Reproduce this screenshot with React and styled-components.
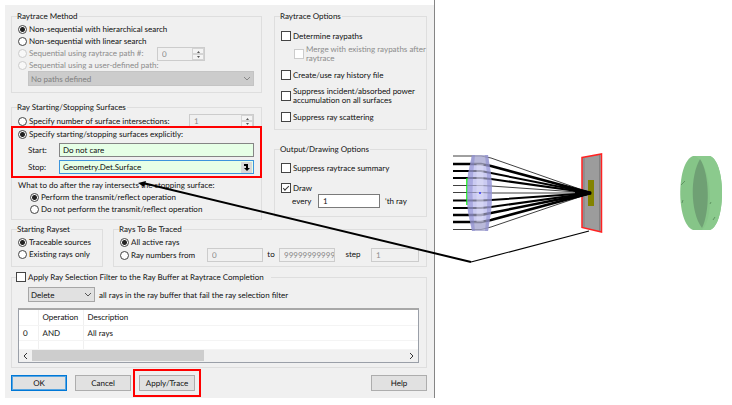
import React from "react";
import styled, { createGlobalStyle } from "styled-components";

const GlobalStyle = createGlobalStyle`
  *, *::before, *::after { box-sizing: border-box; }
  body {
    margin: 0;
    background: #fff;
    color: #111;
    font: 8px/12px Lato, "Liberation Sans", sans-serif;
    text-rendering: geometricPrecision;
  }
  button, input, select, table { font: inherit; color: inherit; margin: 0; text-rendering: inherit; }
`;

const Page = styled.main`
  position: relative;
  display: grid;
  grid-template-columns: minmax(0, 435fr) minmax(0, 297fr);
  align-items: start;
`;

const DialogArea = styled.div`
  padding: 5px 0 0 5px;
  border-right: 1px solid #858585;
`;

const Dialog = styled.form`
  display: flex;
  flex-direction: column;
  padding: 5px 7px 7px 6px;
  background: #f0f0f0;
`;

const Columns = styled.div`
  display: grid;
  grid-template-columns: ${(p) => p.$tracks};
  gap: ${(p) => p.$gap}px;
  margin-top: ${(p) => p.$above || 0}px;
`;

const Stack = styled.div`
  display: flex;
  flex-direction: column;
  min-width: 0;
  gap: ${(p) => p.$gap || 0}px;
`;

const Group = styled.fieldset`
  display: block;
  min-width: 0;
  margin: ${(p) => p.$above || 0}px 0 0;
  padding: ${(p) => p.$top || 1}px 7px ${(p) => p.$bottom || 6}px 6px;
  border: 1px solid #dedede;
`;

const Legend = styled.legend`
  display: flex;
  align-items: center;
  margin-left: ${(p) => (p.$check ? -2 : -1)}px;
  padding: 0 ${(p) => (p.$check ? 7 : 1)}px 0 0;
  height: 12px;
  white-space: nowrap;
`;

const Row = styled.div`
  display: flex;
  align-items: center;
  min-height: 12px;
  gap: ${(p) => p.$gap || 0}px;
  padding-left: ${(p) => p.$indent || 0}px;
  white-space: nowrap;
`;

const Option = styled.label`
  display: flex;
  align-items: center;
  gap: 2px;
  min-height: 12px;
  line-height: ${(p) => (p.$tight ? 9 : 12)}px;
  padding-left: ${(p) => p.$indent || 0}px;
  white-space: nowrap;
  color: ${(p) => (p.$off ? "#8c8c8c" : "inherit")};
`;

const RadioInput = styled.input.attrs({ type: "radio" })`
  appearance: none;
  flex: none;
  width: 9px;
  height: 9px;
  border: 1px solid #444;
  border-radius: 50%;
  background: #fff;
  &:checked { background: radial-gradient(circle, #222 0 2px, #fff 3px); }
  &:disabled { border-color: #ccc; background: #f8f8f8; }
`;

const CheckInput = styled.input.attrs({ type: "checkbox" })`
  appearance: none;
  flex: none;
  display: grid;
  place-items: center;
  width: 10px;
  height: 10px;
  border: 1px solid #444;
  background: #fff;
  &:disabled { border-color: #ccc; }
  &:checked::after {
    content: "";
    width: 6px;
    height: 3px;
    border: solid #333;
    border-width: 0 0 1px 1px;
    transform: translateY(-1px) rotate(-45deg);
  }
`;

const TextInput = styled.input.attrs({ type: "text" })`
  flex: ${(p) => (p.$width ? `0 1 ${p.$width}px` : "1")};
  width: ${(p) => (p.$width ? `${p.$width}px` : "100%")};
  min-width: 0;
  height: 14px;
  padding: 0 0 0 4px;
  border: 1px solid #7a7a7a;
  background: #fff;
  &:disabled { border-color: #ccc; background: #f0f0f0; color: #8c8c8c; }
`;

const SurfaceBox = styled.div`
  flex: 1;
  display: flex;
  align-items: center;
  min-width: 0;
  height: 14px;
  padding-right: 1px;
  border: 1px solid ${(p) => (p.$active ? "#3c94dc" : "#858585")};
  background: #e6ffe6;
`;

const SurfaceInput = styled.input.attrs({ type: "text" })`
  flex: 1;
  min-width: 0;
  height: 12px;
  padding: 0 3px;
  border: 0;
  background: transparent;
`;

const PickButton = styled.button.attrs({ type: "button" })`
  display: grid;
  place-items: center;
  width: 11px;
  height: 11px;
  padding: 0;
  border: 0;
  background: #d8d8d8;
`;

const FieldLabel = styled.label`
  width: ${(p) => p.$width}px;
  flex: none;
`;

const Centered = styled.span`
  text-align: center;
`;

const Highlight = styled.div`
  outline: 2px solid #f00;
  outline-offset: ${(p) => p.$offset}px;
`;

const SurfaceFields = styled(Highlight)`
  display: flex;
  flex-direction: column;
  gap: 3px;
  margin: 0 -6px 3px -5px;
  padding: 0 6px 2px 5px;
`;

const Spinner = styled.div`
  display: flex;
  align-items: stretch;
  width: ${(p) => p.$width}px;
  height: 14px;
  margin-left: ${(p) => (p.$end ? "auto" : "12px")};
  border: 1px solid #ccc;
  color: #8c8c8c;
`;

const SpinnerInput = styled.input`
  flex: 1;
  min-width: 0;
  padding: 0 4px;
  border: 0;
  background: transparent;
  &:disabled { color: #8c8c8c; }
`;

const SpinnerArrows = styled.div`
  display: grid;
  grid-template-rows: 1fr 1fr;
  width: 12px;
`;

const SpinButton = styled.button.attrs({ type: "button" })`
  display: grid;
  place-items: center;
  padding: 0;
  border: 1px solid #d4d4d4;
  background: #f4f4f4;
`;

const SelectBox = styled.div`
  display: grid;
  align-items: center;
  flex: ${(p) => (p.$width ? `0 0 ${p.$width}px` : "1")};
  min-width: 0;
  & > * { grid-area: 1 / 1; }
  & > svg { justify-self: end; margin-right: 3px; pointer-events: none; }
`;

const Select = styled.select`
  appearance: none;
  width: 100%;
  height: 15px;
  padding: 0 2px;
  border: 1px solid #a6a6a6;
  border-radius: 0;
  background: #e1e1e1;
  &:disabled { border-color: #c4c4c4; background: #ccc; color: #808080; opacity: 1; }
`;

const ListView = styled.div`
  margin: 6px 0 0 0;
  border: 1px solid #9a9fa8;
  border-top: 2px solid #a8a8a8;
  background: #fff;
`;

const Table = styled.table`
  width: 100%;
  border-collapse: collapse;
  table-layout: fixed;
`;

const Cell = styled.td`
  height: 15px;
  padding: 0 4px;
  font-weight: 400;
  text-align: left;
  white-space: nowrap;
  border-right: 1px solid #f0f0f0;
  border-bottom: 1px solid #f4f4f4;
  &:last-child { border-right: 0; }
`;

const FillerCell = styled(Cell)`
  height: 9px;
`;

const Col = styled.col`
  width: ${(p) => (p.$width ? `${p.$width}px` : "auto")};
`;

const ScrollBar = styled.div`
  display: flex;
  align-items: center;
  justify-content: space-between;
  height: 12px;
  padding: 0 4px;
  background: #f0f0f0;
`;

const ScrollTrack = styled.div`
  flex: 1;
  margin: 0 4px;
`;

const ScrollThumb = styled.div`
  width: 46%;
  height: 11px;
  background: #cdcdcd;
`;

const Buttons = styled.div`
  display: flex;
  gap: 8px;
  margin-top: 7px;
`;

const PushButton = styled.button.attrs({ type: "button" })`
  display: block;
  width: 56px;
  height: 16px;
  padding: 0;
  line-height: 14px;
  border: 1px solid #adadad;
  background: #e1e1e1;
  ${(p) => p.$primary && "border-color: #0078d7; box-shadow: inset 0 0 0 1px #58a5e0;"}
`;

const Spacer = styled.div`
  flex: 1;
`;

const Scene = styled.svg`
  width: 100%;
  height: 130px;
  margin-top: 140px;
  overflow: visible;
`;

const Pointer = styled.svg`
  position: absolute;
  inset: 0;
  width: 100%;
  height: 100%;
  pointer-events: none;
`;

function Chevron({ color = "#555", d = "M1 1 L4 4 L7 1", w = 8, h = 5 }) {
  return (
    <svg width={w} height={h} fill="none" stroke={color}>
      <path d={d} />
    </svg>
  );
}

function SpinBox({ label, value, width, end }) {
  return (
    <Spinner $width={width} $end={end}>
      <SpinnerInput aria-label={label} defaultValue={value} disabled />
      <SpinnerArrows>
        <SpinButton disabled aria-label="Increase">
          <svg width="5" height="3"><path d="M1 3 L2.5 1 L4 3 Z" fill="#555" /></svg>
        </SpinButton>
        <SpinButton disabled aria-label="Decrease">
          <svg width="5" height="3"><path d="M1 0 L2.5 2 L4 0 Z" fill="#555" /></svg>
        </SpinButton>
      </SpinnerArrows>
    </Spinner>
  );
}

function Radio({ name, checked, off, indent, children }) {
  return (
    <Option $off={off} $indent={indent}>
      <RadioInput name={name} defaultChecked={checked} disabled={off} />
      {children}
    </Option>
  );
}

function Check({ checked, off, indent, tight, children }) {
  return (
    <Option $off={off} $indent={indent} $tight={tight}>
      <CheckInput defaultChecked={checked} disabled={off} />
      <span>{children}</span>
    </Option>
  );
}

/* [incoming height, stroke width, height where the ray leaves the lens] */
const rays = [
  [16, 1, 18], [24, 2.5, 26], [31, 2, 33], [38, 2, 39],
  [45.5, 1, 46], [52.5, 1, 53], [60.5, 2, 60], [68, 2, 67],
  [75, 2.5, 73], [82, 2.5, 80], [89.5, 1, 87],
];

const LENS = "M37 15 H53 L56 34 Q58 53 56 72 L53 91 H37 L33 72 Q31 53 33 34 Z";

function OpticsScene() {
  return (
    <Scene role="img" aria-label="Rays focused by a lens onto a detector">
      <path d={LENS} fill="#d2d2f5" />
      <path d="M147 17.5 L166.5 14 V92 L147 87.5 Z" fill="#9c9c9c" stroke="#f22" strokeWidth="1.5" />
      <path d="M149 18 V87 M164.5 15 V91" stroke="#777" strokeWidth="0.7" />
      <rect x="153" y="40" width="6" height="26" fill="#838300" />
      {rays.map(([y, w, exitY]) => (
        <path
          key={y}
          d={`M18 ${y} H46 L56 ${exitY} L156 53`}
          fill="none"
          stroke="#000"
          strokeWidth={w}
          strokeOpacity={w === 1 ? 0.75 : 1}
        />
      ))}
      <path d="M122 45 L153 51 L157 53 L153 55 L122 62 L140 54 V52 Z" fill="#000" />
      <path d="M32 38 V65" stroke="#0e0" strokeWidth="1.5" />
      <path d={LENS} fill="#c4c4ee" fillOpacity=".6" />
      <path d="M37 15 H53 L54 24 H36 Z M36 82 H54 L53 91 H37 Z" fill="#9fa0b8" fillOpacity=".4" />
      <path d="M37 15 L33 34 Q31 53 33 72 L37 91 L40 91 Q35 53 40 15 Z M53 15 L56 34 Q58 53 56 72 L53 91 L50 91 Q55 53 50 15 Z" fill="#8080cc" fillOpacity=".45" />
      <path d="M45 24 V82" stroke="#e6e6fa" strokeWidth="7" strokeOpacity=".4" />
      <circle cx="45" cy="53" r="1" fill="#33f" />
      <path d="M258 16 H275 C291 22 291 84 275 90 H258 C241 84 241 22 258 16 Z" fill="#86c588" />
      <path d="M260 16 C277 24 280 78 267 90 H275 C291 84 291 22 275 16 Z" fill="#8bca8d" />
      <path d="M265 19 C255 36 255 72 267 88 C275 72 275 34 265 19 Z" fill="#6fa074" />
      <path d="M246 45 L250 41 M247 63 L248 60 M275 64 L276 62 M278 80 L280 77" stroke="#5f9562" strokeWidth="1" />
    </Scene>
  );
}

export default function App() {
  return (
    <>
      <GlobalStyle />
      <Page>
        <DialogArea>
          <Dialog>
            <Columns $tracks="minmax(0, 251fr) minmax(0, 153fr)" $gap={12}>
              <Stack $gap={8}>
                <Group>
                  <Legend>Raytrace Method</Legend>
                  <Radio name="method" checked>Non-sequential with hierarchical search</Radio>
                  <Radio name="method">Non-sequential with linear search</Radio>
                  <Columns $tracks="127px 1fr" $gap={0}>
                    <Stack>
                      <Radio name="method" off>Sequential using raytrace path #:</Radio>
                      <Radio name="method" off>Sequential using a user-defined path:</Radio>
                    </Stack>
                    <SpinBox label="Raytrace path number" value="0" width={48} />
                  </Columns>
                  <Row $indent={10}>
                    <SelectBox>
                      <Select aria-label="User-defined path" disabled>
                        <option>No paths defined</option>
                      </Select>
                      <Chevron color="#888" />
                    </SelectBox>
                  </Row>
                </Group>

                <Group $bottom={4}>
                  <Legend>Ray Starting/Stopping Surfaces</Legend>
                  <Row>
                    <Radio name="surfaces">Specify number of surface intersections:</Radio>
                    <SpinBox label="Number of intersections" value="1" width={65} end />
                  </Row>
                  <SurfaceFields $offset={0}>
                    <Radio name="surfaces" checked>Specify starting/stopping surfaces explicitly:</Radio>
                    <Row $indent={10}>
                      <FieldLabel htmlFor="start" $width={31}>Start:</FieldLabel>
                      <SurfaceBox><SurfaceInput id="start" defaultValue="Do not care" /></SurfaceBox>
                    </Row>
                    <Row $indent={10}>
                      <FieldLabel htmlFor="stop" $width={31}>Stop:</FieldLabel>
                      <SurfaceBox $active>
                        <SurfaceInput id="stop" defaultValue="Geometry.Det.Surface" />
                        <PickButton aria-label="Pick surface">
                          <svg width="7" height="7"><path d="M1 1 H4 V4" fill="none" stroke="#000" strokeWidth="2" /><path d="M1 4 H7 L4 7 Z" /></svg>
                        </PickButton>
                      </SurfaceBox>
                    </Row>
                  </SurfaceFields>
                  <Row>What to do after the ray intersects the stopping surface:</Row>
                  <Radio name="after" indent={12} checked>Perform the transmit/reflect operation</Radio>
                  <Radio name="after" indent={12}>Do not perform the transmit/reflect operation</Radio>
                </Group>
              </Stack>

              <Stack $gap={13}>
                <Group $top={8}>
                  <Legend>Raytrace Options</Legend>
                  <Stack $gap={6}>
                    <Stack $gap={3}>
                      <Check>Determine raypaths</Check>
                      <Check off tight indent={13}>Merge with existing raypaths after<br />raytrace</Check>
                    </Stack>
                    <Check>Create/use ray history file</Check>
                    <Check tight>Suppress incident/absorbed power<br />accumulation on all surfaces</Check>
                    <Check>Suppress ray scattering</Check>
                  </Stack>
                </Group>
                <Group $top={7} $bottom={8}>
                  <Legend>Output/Drawing Options</Legend>
                  <Stack $gap={8}>
                    <Check>Suppress raytrace summary</Check>
                    <Stack>
                      <Check checked>Draw</Check>
                      <Row $indent={11}>
                        <FieldLabel htmlFor="every" $width={26}>every</FieldLabel>
                        <TextInput id="every" $width={62} defaultValue="1" />
                        <Row $indent={5}>'th ray</Row>
                      </Row>
                    </Stack>
                  </Stack>
                </Group>
              </Stack>
            </Columns>

            <Columns $tracks="minmax(0, 92fr) minmax(0, 314fr)" $gap={10} $above={3}>
              <Group>
                <Legend>Starting Rayset</Legend>
                <Radio name="rayset" checked>Traceable sources</Radio>
                <Radio name="rayset">Existing rays only</Radio>
              </Group>
              <Group $bottom={4}>
                <Legend>Rays To Be Traced</Legend>
                <Radio name="traced" checked>All active rays</Radio>
                <Columns $tracks="87fr 56fr 16fr 56fr 36fr 48fr" $gap={0}>
                  <Radio name="traced">Ray numbers from</Radio>
                  <TextInput aria-label="From" defaultValue="0" disabled />
                  <Centered>to</Centered>
                  <TextInput aria-label="To" defaultValue="99999999999" disabled />
                  <Centered>step</Centered>
                  <TextInput aria-label="Step" defaultValue="1" disabled />
                </Columns>
              </Group>
            </Columns>

            <Group $above={4} $top={4} $bottom={4}>
              <Legend $check><Check>Apply Ray Selection Filter to the Ray Buffer at Raytrace Completion</Check></Legend>
              <Row $indent={10} $gap={4}>
                <SelectBox $width={67}>
                  <Select aria-label="Filter action"><option>Delete</option></Select>
                  <Chevron />
                </SelectBox>
                all rays in the ray buffer that fail the ray selection filter
              </Row>
              <ListView>
                <Table>
                  <colgroup><Col $width={19} /><Col $width={45} /><Col /></colgroup>
                  <thead>
                    <tr><Cell as="th" /><Cell as="th">Operation</Cell><Cell as="th">Description</Cell></tr>
                  </thead>
                  <tbody>
                    <tr><Cell>0</Cell><Cell>AND</Cell><Cell>All rays</Cell></tr>
                    <tr><FillerCell /><FillerCell /><FillerCell /></tr>
                  </tbody>
                </Table>
                <ScrollBar>
                  <Chevron color="#333" d="M4 1 L1 4 L4 7" w={5} h={8} />
                  <ScrollTrack><ScrollThumb /></ScrollTrack>
                  <Chevron color="#333" d="M1 1 L4 4 L1 7" w={5} h={8} />
                </ScrollBar>
              </ListView>
            </Group>

            <Buttons>
              <PushButton $primary>OK</PushButton>
              <PushButton>Cancel</PushButton>
              <Highlight $offset={4}><PushButton>Apply/Trace</PushButton></Highlight>
              <Spacer />
              <PushButton>Help</PushButton>
            </Buttons>
          </Dialog>
        </DialogArea>
        <OpticsScene />
        <Pointer aria-hidden="true">
          <path d="M143 183 L471 262" fill="none" stroke="#000" strokeWidth="2" />
          <path d="M471 262 L589 231" fill="none" stroke="#000" strokeWidth="1.2" />
          <path d="M138 183 L146 181 L144 187 Z" />
        </Pointer>
      </Page>
    </>
  );
}
